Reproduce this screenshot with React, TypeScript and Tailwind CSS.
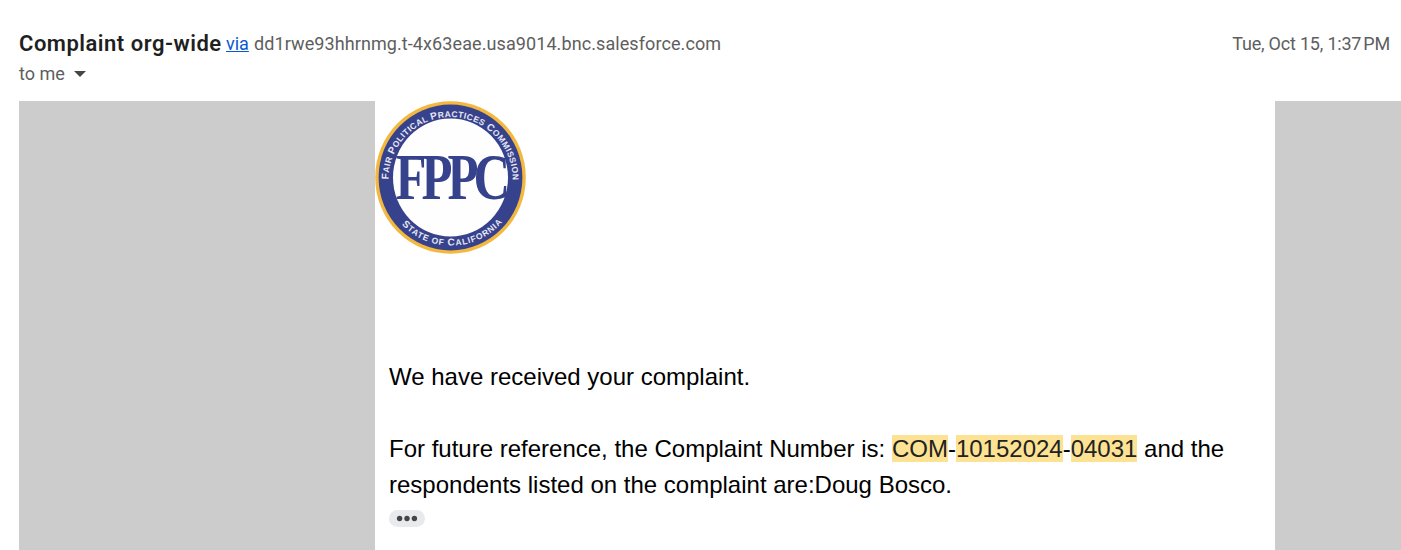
const highlights = ["COM", "10152024", "04031"]

// small caps: the first letter of each word is set larger
function SmallCaps({ text }: { text: string }) {
  return (
    <>
      {text.split(" ").map((word, i) => (
        <tspan key={i}>
          {i > 0 ? " " : ""}
          <tspan fontSize={word === "OF" ? 8.5 : 10}>{word[0]}</tspan>
          <tspan fontSize="8.5">{word.slice(1)}</tspan>
        </tspan>
      ))}
    </>
  )
}

function Seal() {
  return (
    <svg width="151" height="153" viewBox="0 0 151 153" className="block" role="img" aria-label="FPPC seal">
      <defs>
        <path id="seal-top" d="M13.5 78.5 A62.1 62.5 0 1 1 137.7 78.5" />
        <path id="seal-bottom" d="M26.5 123.5 A68.7 69.1 0 0 0 128.5 120" />
      </defs>
      <ellipse cx="75.5" cy="76.5" rx="75.3" ry="76.3" fill="#f3b83f" />
      <ellipse cx="75.5" cy="76.5" rx="71.9" ry="72.9" fill="#37428c" />
      <ellipse cx="75.5" cy="76.5" rx="57.5" ry="59" fill="#fefefe" />
      <g fill="#e6e7f3" fontFamily="'Liberation Sans', sans-serif" fontSize="8.5" fontWeight="bold">
        <text>
          <textPath href="#seal-top" textLength="196">
            <SmallCaps text="FAIR POLITICAL PRACTICES COMMISSION" />
          </textPath>
        </text>
        <text>
          <textPath href="#seal-bottom" textLength="113">
            <SmallCaps text="STATE OF CALIFORNIA" />
          </textPath>
        </text>
      </g>
      <text
        transform="translate(20.5 98.3) scale(0.78 1)"
        fill="#37428c"
        fontFamily="'Liberation Serif', serif"
        fontSize="65"
        fontWeight="bold"
        letterSpacing="-6.4"
      >
        FPPC
      </text>
    </svg>
  )
}

function MessageHeader() {
  return (
    <header className="h-[101px] pl-[19px] pr-[11px] pt-8 font-[Roboto,sans-serif] text-[18px] leading-6 text-[#5e5e5e]">
      <div className="flex justify-between whitespace-nowrap">
        <div className="flex">
          <h3 className="w-[207px] text-[22px] font-semibold tracking-[0.5px] text-[#1f1f1f]">Complaint org-wide</h3>
          <a className="w-[28px] text-[#0b57d0] underline">via</a>
          <span className="tracking-[0.09px]">dd1rwe93hhrnmg.t-4x63eae.usa9014.bnc.salesforce.com</span>
        </div>
        <span className="tracking-[-0.2px]">Tue, Oct 15, 1:37&#8239;PM</span>
      </div>
      <div className="mt-1.5 flex items-center gap-[9px]">
        <span>to me</span>
        <svg width="12" height="6" viewBox="0 0 12 6">
          <path d="M0 0h12L6 6z" fill="#444746" />
        </svg>
      </div>
    </header>
  )
}

export default function App() {
  return (
    <div className="h-[550px] w-[1401px] overflow-hidden bg-white">
      <MessageHeader />
      <main className="ml-[19px] flex h-[449px] bg-[#cccccc] pl-[356px]">
        <article className="w-[900px] bg-white font-['Liberation_Sans',Arial,sans-serif] text-[24px] leading-9 text-black">
          <Seal />
          <div className="px-3.5 pt-[105px]">
            <p>We have received your complaint.</p>
            <p className="mt-9">
              For future reference, the Complaint Number is:{" "}
              {highlights.map((part, i) => (
                <span key={part}>
                  {i > 0 && "-"}
                  <mark className="bg-[#fde293] text-[#222222]">{part}</mark>
                </span>
              ))}{" "}
              and the respondents listed on the complaint are:Doug Bosco.
            </p>
            <button className="mt-[7px] flex h-[17px] w-9 items-center justify-center rounded-full bg-[#e8eaed]">
              <svg width="22" height="7" viewBox="0 0 22 7" fill="#444746">
                <circle cx="3.6" cy="3.5" r="2.7" />
                <circle cx="11" cy="3.5" r="2.7" />
                <circle cx="18.4" cy="3.5" r="2.7" />
              </svg>
            </button>
          </div>
        </article>
      </main>
    </div>
  )
}
